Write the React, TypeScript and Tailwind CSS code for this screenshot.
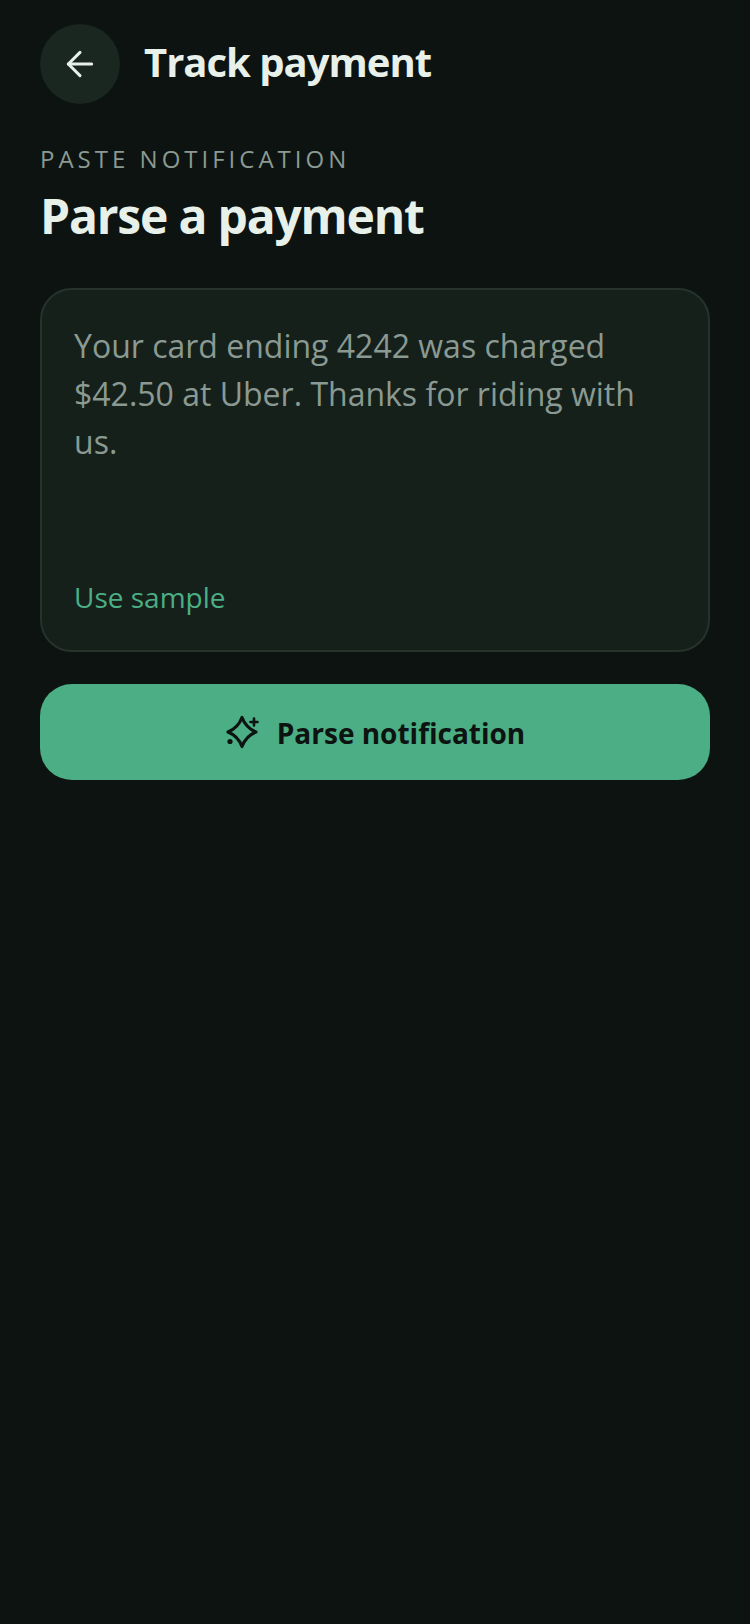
import { ArrowLeft } from 'lucide-react';

// Four point star with a small plus and dot, the package's Sparkles differs
const SparkleIcon = () => (
  <svg width="36" height="36" viewBox="0 0 36 36" fill="none" stroke="currentColor" strokeLinecap="round" strokeLinejoin="round">
    <path d="M17 3.5Q21 14 31 18Q21 22 17 32.5Q13 22 3 18Q13 14 17 3.5Z" strokeWidth="3.2" />
    <path d="M29 4.5v7M25.5 8h7" strokeWidth="2.6" />
    <circle cx="5" cy="27.5" r="2.6" fill="currentColor" stroke="none" />
  </svg>
);

const App = () => {
  return (
    <div className="min-h-[1624px] w-[750px] bg-[#0d1310] px-10 pt-6 font-['Open_Sans',sans-serif]">
      {/* Header */}
      <div className="flex items-center gap-6">
        <button className="flex h-20 w-20 items-center justify-center rounded-full bg-[#1a2620] text-[#e8f0ea]">
          <ArrowLeft size={40} strokeWidth={1.8} />
        </button>
        <h1 className="pb-1 text-[40px] leading-[52px] font-bold tracking-[-1px] text-[#e8f0ea]">Track payment</h1>
      </div>

      {/* Title block */}
      <p className="mt-[37px] text-[24px] leading-[36px] tracking-[4px] text-[#8a9a92]">PASTE NOTIFICATION</p>
      <h2 className="mt-[9px] text-[48px] leading-[60px] font-bold tracking-[-1.2px] text-[#e8f0ea]">Parse a payment</h2>

      {/* Notification input */}
      <div className="mt-[42px] flex h-[364px] flex-col justify-between rounded-[32px] border-2 border-[#25332c] bg-[#16201b] px-8 pt-8 pb-[34px]">
        <p className="text-[32px] leading-[48px] text-[#8a9a92]">
          Your card ending 4242 was charged $42.50 at Uber. Thanks for riding with us.
        </p>
        <span className="text-[28px] leading-[38px] text-[#4bae84]">Use sample</span>
      </div>

      {/* Parse action */}
      <button className="mt-8 flex h-24 w-full items-center justify-center gap-4 rounded-[32px] bg-[#4bae84] text-[#0d1310]">
        <SparkleIcon />
        <span className="pt-[2px] text-[28px] leading-[40px] font-bold">Parse notification</span>
      </button>
    </div>
  );
};

export default App;
